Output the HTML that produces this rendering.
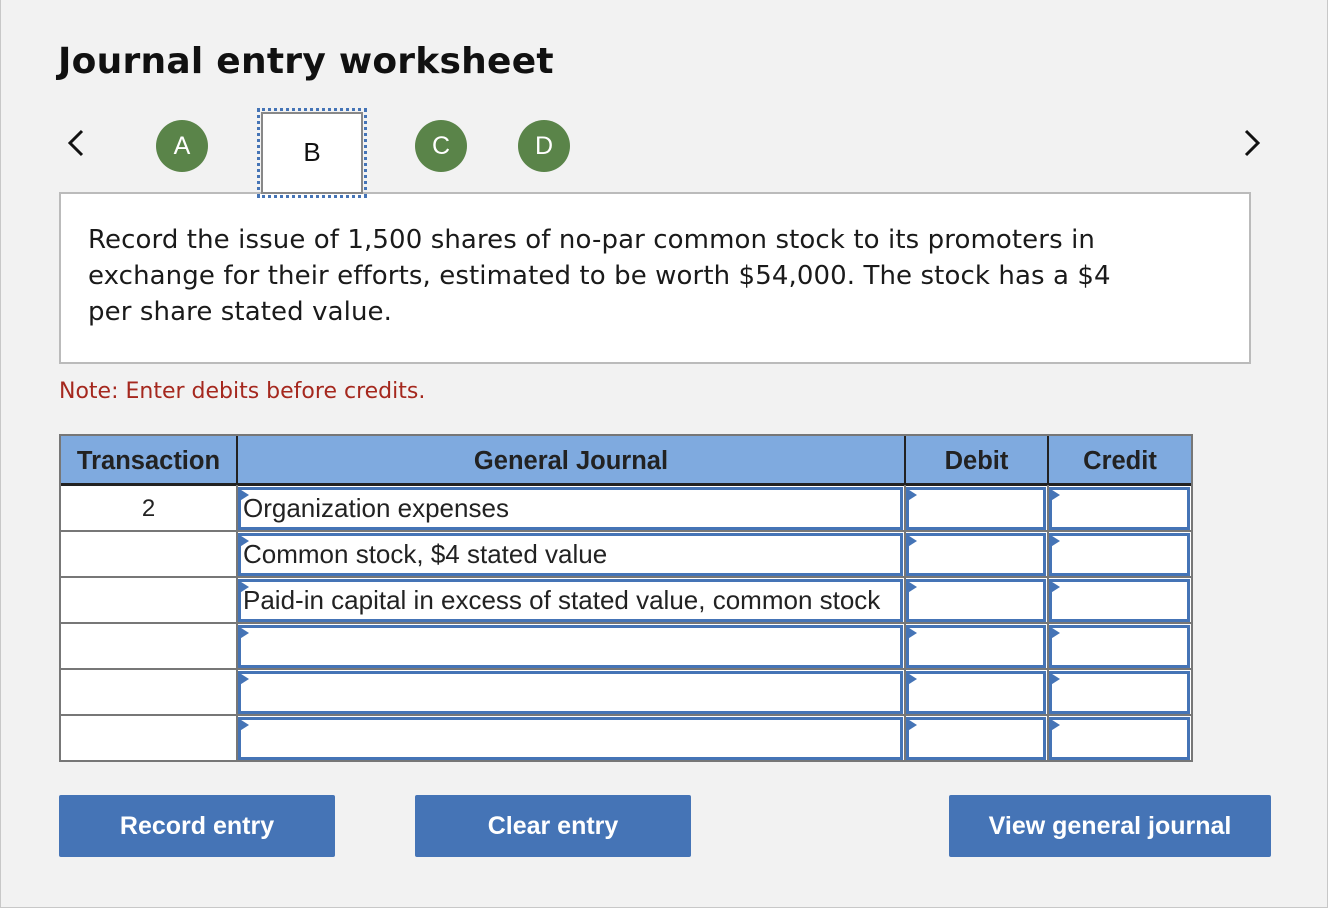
<!DOCTYPE html>
<html><head><meta charset="utf-8"><style>
*{box-sizing:border-box;margin:0;padding:0}
body{width:1328px;height:910px;background:#fff;position:relative;overflow:hidden;font-family:"Liberation Sans",Arial,sans-serif}
.page{position:absolute;left:0;top:0;width:1328px;height:908px;background:#f2f2f2;border:1px solid #c8c8c8;border-top:none}
.a{position:absolute}
h1{position:absolute;left:57px;top:41px;font-family:"DejaVu Sans",sans-serif;font-size:36px;letter-spacing:0.25px;font-weight:bold;color:#111}
.circ{position:absolute;width:52px;height:52px;border-radius:50%;background:#5a8449;color:#fff;font-size:25px;text-align:center;line-height:52px}
.btn{position:absolute;top:795px;height:62px;background:#4574b6;color:#fff;font-weight:bold;font-size:25px;text-align:center;line-height:62px;border-radius:2px}
.tbl{position:absolute;left:58px;top:434px;width:1134px;height:328px;background:#fff;border:2px solid #777}
.hd{position:absolute;top:0;height:50px;background:#7faadf;font-weight:bold;font-size:25.5px;color:#222;text-align:center;line-height:50px;border-right:2px solid #222;border-bottom:3px solid #222}
.hl{position:absolute;left:0;width:1130px;height:2px;background:#777}
.vl{position:absolute;top:49px;width:2px;height:276px;background:#777}
.in{position:absolute;height:43px;border:3px solid #4574b6;background:#fff;font-size:26px;color:#222;line-height:37px;padding-left:2px;white-space:nowrap}
.in:before{content:"";position:absolute;left:-3px;top:-2px;border-left:11px solid #4574b6;border-top:7px solid transparent;border-bottom:7px solid transparent}
</style></head><body><div class="page">
<h1>Journal entry worksheet</h1>
<svg class="a" style="left:64px;top:128px" width="22" height="30"><path d="M17 3 L5 15 L17 27" stroke="#111" stroke-width="3" fill="none"/></svg>
<svg class="a" style="left:1240px;top:128px" width="22" height="30"><path d="M5 3 L17 15 L5 27" stroke="#111" stroke-width="3" fill="none"/></svg>
<div class="circ" style="left:155px;top:120px">A</div>
<div class="circ" style="left:414px;top:120px">C</div>
<div class="circ" style="left:517px;top:120px">D</div>
<div class="a" style="left:58px;top:192px;width:1192px;height:172px;background:#fff;border:2px solid #bbb;padding:28px 0 0 27px;font-family:'DejaVu Sans',sans-serif;font-size:26px;letter-spacing:0.1px;line-height:36px;color:#1a1a1a;white-space:nowrap">Record the issue of 1,500 shares of no-par common stock to its promoters in<br>exchange for their efforts, estimated to be worth $54,000. The stock has a $4<br>per share stated value.</div>
<div class="a" style="left:256px;top:108px;width:110px;height:90px;border:3px dotted #4574b6;z-index:2"><div style="position:absolute;left:1px;top:1px;right:1px;bottom:1px;border:2px solid #888;background:#fff;text-align:center;line-height:76px;font-size:26px;color:#111">B</div></div>
<div class="a" style="left:58px;top:379px;font-family:'DejaVu Sans',sans-serif;font-size:22px;color:#a5281e">Note: Enter debits before credits.</div>
<div class="tbl">
<div class="hd" style="left:0;width:177px">Transaction</div>
<div class="hd" style="left:177px;width:668px">General Journal</div>
<div class="hd" style="left:845px;width:143px">Debit</div>
<div class="hd" style="left:988px;width:142px;border-right:none">Credit</div>
<div class="hl" style="top:94px"></div><div class="hl" style="top:140px"></div><div class="hl" style="top:186px"></div><div class="hl" style="top:232px"></div><div class="hl" style="top:278px"></div>
<div class="vl" style="left:175px"></div><div class="vl" style="left:843px"></div><div class="vl" style="left:986px"></div>
<div class="a" style="left:0;top:51px;width:175px;height:44px;text-align:center;line-height:44px;font-size:24px;color:#222">2</div>
<div class="in" style="left:177px;top:51px;width:665px">Organization expenses</div>
<div class="in" style="left:177px;top:97px;width:665px">Common stock, $4 stated value</div>
<div class="in" style="left:177px;top:143px;width:665px">Paid-in capital in excess of stated value, common stock</div>
<div class="in" style="left:177px;top:189px;width:665px"></div>
<div class="in" style="left:177px;top:235px;width:665px"></div>
<div class="in" style="left:177px;top:281px;width:665px"></div>
<div class="in" style="left:845px;top:51px;width:140px"></div><div class="in" style="left:988px;top:51px;width:141px"></div>
<div class="in" style="left:845px;top:97px;width:140px"></div><div class="in" style="left:988px;top:97px;width:141px"></div>
<div class="in" style="left:845px;top:143px;width:140px"></div><div class="in" style="left:988px;top:143px;width:141px"></div>
<div class="in" style="left:845px;top:189px;width:140px"></div><div class="in" style="left:988px;top:189px;width:141px"></div>
<div class="in" style="left:845px;top:235px;width:140px"></div><div class="in" style="left:988px;top:235px;width:141px"></div>
<div class="in" style="left:845px;top:281px;width:140px"></div><div class="in" style="left:988px;top:281px;width:141px"></div>
</div>
<div class="btn" style="left:58px;width:276px">Record entry</div>
<div class="btn" style="left:414px;width:276px">Clear entry</div>
<div class="btn" style="left:948px;width:322px">View general journal</div>
</div></body></html>
